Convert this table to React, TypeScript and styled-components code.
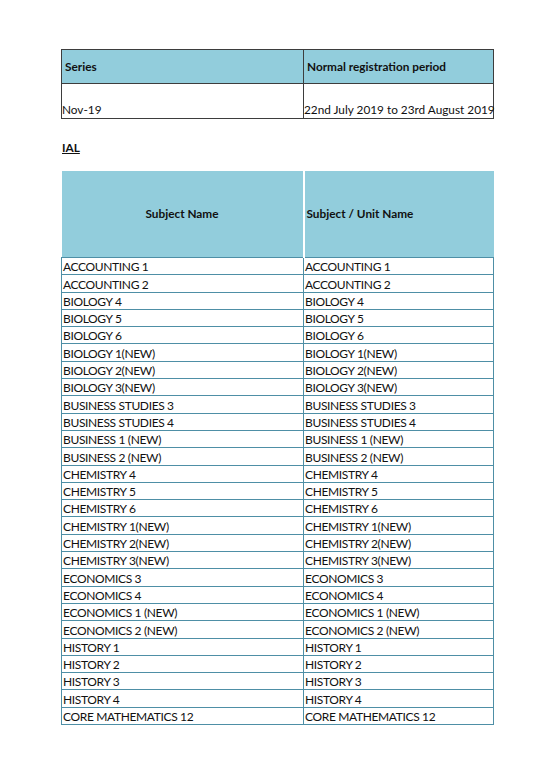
import React from 'react'
import styled, { createGlobalStyle } from 'styled-components'

const GlobalStyle = createGlobalStyle`
  html, body {
    margin: 0;
    padding: 0;
    background: #ffffff;
  }
  body {
    font-family: Lato, 'Open Sans', Arial, sans-serif;
    color: #111111;
  }
`

const Page = styled.div`
  width: 550px;
  height: 777px;
  padding: 49px 0 0 61px;
  box-sizing: border-box;
`

const PeriodTable = styled.table`
  border-collapse: collapse;
  width: 433px;
  table-layout: fixed;
  font-size: 11.8px;
`

const PeriodHead = styled.th`
  background: #92cddc;
  border: 1.5px solid #3d3d3d;
  height: 33px;
  padding: 0 0 0 3px;
  text-align: left;
  font-weight: 700;
  vertical-align: middle;
`

const PeriodCell = styled.td`
  border: 1.5px solid #3d3d3d;
  height: 33px;
  padding: 0 0 1px 0;
  vertical-align: bottom;
  white-space: nowrap;
`

const SectionTitle = styled.div`
  margin: 21px 0 0 1px;
  height: 17px;
  font-size: 11.8px;
  font-weight: 700;
  text-decoration: underline;
`

const SubjectTable = styled.table`
  margin-top: 14px;
  border-collapse: collapse;
  width: 433px;
  table-layout: fixed;
  font-size: 12px;
`

const SubjectHead = styled.th<{ $center?: boolean }>`
  background: #92cddc;
  height: 84px;
  padding: 0 0 2px ${p => (p.$center ? '0' : '2px')};
  text-align: ${p => (p.$center ? 'center' : 'left')};
  font-size: 11.8px;
  font-weight: 700;
  vertical-align: middle;
  border-right: 2px solid #ffffff;
  &:last-child {
    border-right: none;
  }
`

const SubjectCell = styled.td`
  border: 1.5px solid #4e8fa6;
  height: 16.3px;
  padding: 0 0 0 1px;
  line-height: 15px;
  letter-spacing: -0.35px;
  white-space: nowrap;
  overflow: hidden;
  vertical-align: bottom;
`

const subjects = [
  'ACCOUNTING 1',
  'ACCOUNTING 2',
  'BIOLOGY 4',
  'BIOLOGY 5',
  'BIOLOGY 6',
  'BIOLOGY 1(NEW)',
  'BIOLOGY 2(NEW)',
  'BIOLOGY 3(NEW)',
  'BUSINESS STUDIES 3',
  'BUSINESS STUDIES 4',
  'BUSINESS 1 (NEW)',
  'BUSINESS 2 (NEW)',
  'CHEMISTRY 4',
  'CHEMISTRY 5',
  'CHEMISTRY 6',
  'CHEMISTRY 1(NEW)',
  'CHEMISTRY 2(NEW)',
  'CHEMISTRY 3(NEW)',
  'ECONOMICS 3',
  'ECONOMICS 4',
  'ECONOMICS 1 (NEW)',
  'ECONOMICS 2 (NEW)',
  'HISTORY 1',
  'HISTORY 2',
  'HISTORY 3',
  'HISTORY 4',
  'CORE MATHEMATICS 12',
]

const App = () => {
  return (
    <>
      <GlobalStyle />
      <Page>
        <PeriodTable>
          <colgroup>
            <col style={{ width: 242 }} />
            <col />
          </colgroup>
          <thead>
            <tr>
              <PeriodHead>Series</PeriodHead>
              <PeriodHead>Normal registration period</PeriodHead>
            </tr>
          </thead>
          <tbody>
            <tr>
              <PeriodCell>Nov-19</PeriodCell>
              <PeriodCell>22nd July 2019 to 23rd August 2019</PeriodCell>
            </tr>
          </tbody>
        </PeriodTable>
        <SectionTitle>IAL</SectionTitle>
        <SubjectTable>
          <colgroup>
            <col style={{ width: 242 }} />
            <col />
          </colgroup>
          <thead>
            <tr>
              <SubjectHead $center>Subject Name</SubjectHead>
              <SubjectHead>Subject / Unit Name</SubjectHead>
            </tr>
          </thead>
          <tbody>
            {subjects.map(s => (
              <tr key={s}>
                <SubjectCell>{s}</SubjectCell>
                <SubjectCell>{s}</SubjectCell>
              </tr>
            ))}
          </tbody>
        </SubjectTable>
      </Page>
    </>
  )
}

export default App
